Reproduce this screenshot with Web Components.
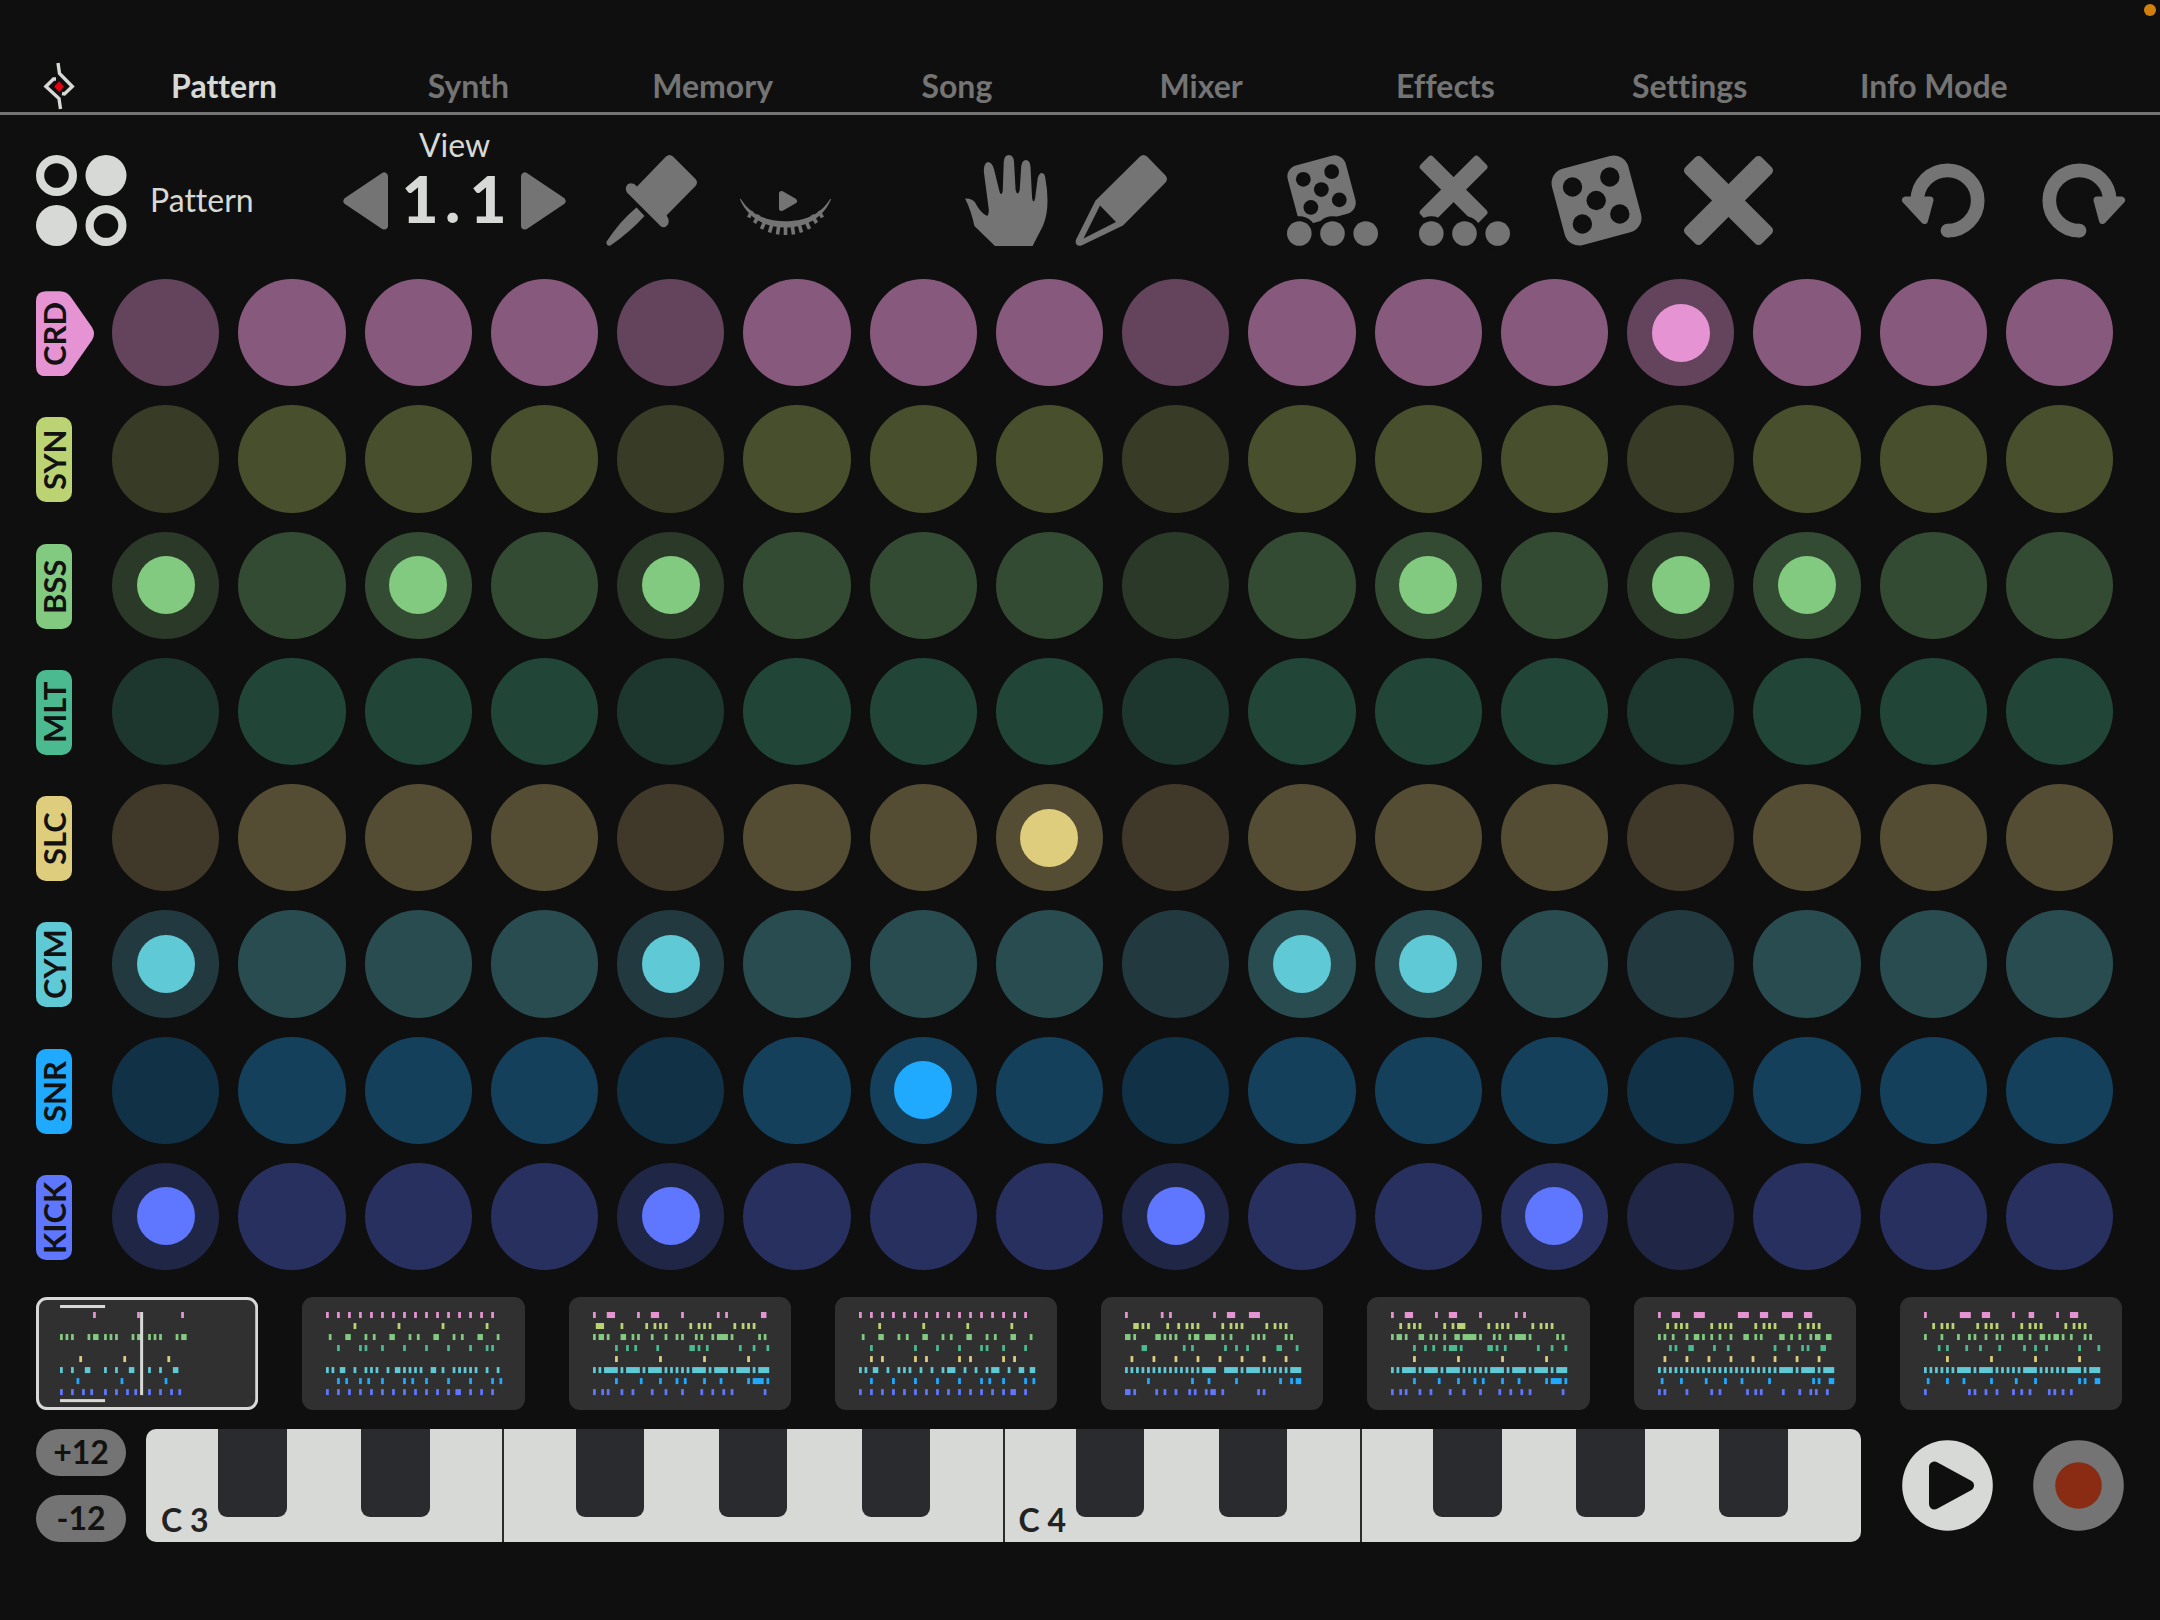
<!DOCTYPE html>
<html lang="en">
<head>
<meta charset="utf-8">
<meta name="viewport" content="width=device-width, initial-scale=1">
<title>Pattern</title>
<style>
  :root {
    --bg: #0f0f0f;
    --light: #d7d9d6;
    --grey: #747474;
    --key: #2a2b2f;
    --panel: #303030;
    --edge: 36px;
  }
  body {
    margin: 0;
    background: var(--bg);
    color: var(--light);
    font: 400 32px/40px Lato, "Open Sans", sans-serif;
    font-variant-ligatures: none;
  }
</style>
</head>
<body>
<groove-app></groove-app>

<script>
const TRACKS = [
  { name: 'CRD', color: '#e693d3', dim: '#64435c', mid: '#87597c', on: [12], active: true },
  { name: 'SYN', color: '#bcd373', dim: '#383b25', mid: '#484f2d', on: [] },
  { name: 'BSS', color: '#82ca80', dim: '#2b3929', mid: '#344b33', on: [0, 2, 4, 10, 12, 13] },
  { name: 'MLT', color: '#4bba90', dim: '#1d372e', mid: '#214638', on: [] },
  { name: 'SLC', color: '#dfcd7e', dim: '#403929', mid: '#544d33', on: [7] },
  { name: 'CYM', color: '#60c9d6', dim: '#223a3f', mid: '#294c51', on: [0, 4, 9, 10] },
  { name: 'SNR', color: '#1faaff', dim: '#113146', mid: '#14405b', on: [6] },
  { name: 'KICK', color: '#5f76ff', dim: '#202646', mid: '#28305f', on: [0, 4, 8, 11] },
];

const EVERY4 = '0 4 8 12 16 20 24 28 32 36 40 44 48 52 56 60';
const SYN_FILL = '3 6 8 10 19 22 24 26 35 38 40 42 51 54 56 58';

// one entry per pattern, one string per track, steps 0-63, "a-b" is a run
const PATTERNS = [
  [
    '12 28 44', '',
    '0 2 4 10 12-13 16 18 20 26 28-29 32 34 36 42 44-45', '',
    '7 23 39', '0 4 9-10 16 20 25-26 32 36 41-42', '6 22 38',
    '0 4 8 11 16 20 24 27 32 36 40 43',
  ],
  [
    EVERY4, '10 26 42 58',
    '1 7-8 14 17 23-24 30 33 39-40 46 49 55-56 62',
    '4 12 14 20 28 36 44 52 58 60', '',
    '0 2 5-6 10 14 16 18 22 25-26 28 30 32 34 38-39 42 46 48 50 52 54 58 62',
    '4 7 12 15 20 28 31 36 44 52 60 63',
    '0 4 8 12 16 20 24 28 32 36 40 44 47-48 52 56 60',
  ],
  [
    '0 5-7 16 21-23 32 45 48 61-62',
    '1-3 10 19 22 24 26 35 38 40 42 51 54 56 58',
    '0 2-3 5 10-11 14 16 21 26 30 32 37 39 43 45-48 50 60 62',
    '8 12 15 23 35-36 38 41 53 58 63', '8 24 40 56',
    '0 2 4-8 10 12-16 18 20-24 26 28 30 32 34 36-40 42 44-48 50 52-56 58 60-63',
    '8 17 24 30 33 40 46 56 58-61 63',
    '0 3 5 10 14 21 26 32 39 43 47 50 62',
  ],
  [
    EVERY4, '7 23 39 55',
    '1 7-8 14 17 23-24 30 33 39-40 46 49 55-56 62',
    '4 20 28 36 44 46 52 60', '4 8 20 24 36 40 52 56',
    '0 2 5-6 10 14 16 18 22 26 30 32-34 38 42 46 48-50 54 58-59 62-63',
    '4 12 20 28 36 44 47 52 60 63',
    '0 4 8 12 16 20 24 28 32 36 40 44 48 52 55-56 60',
  ],
  [
    '0 13 16 32 37-39 45-48',
    '3-4 6 8 15 19 22 24 26 35 38 40 42 51 54 56 58',
    '0-1 3 11-12 14 16 18 23 25-26 29-32 35 38 46 48 50 58 60',
    '6-7 21 24 36 40 44 55-56 62', '2 10 18 26 34 42 50 58',
    '0 2 4 6 8 10 12 14 16 18 20 22 24 26 28-32 36-40 42 44-48 50 52 54 56 58 60-63',
    '8 24 30 40 56 60 62-63',
    '0-1 3 11 14 18 23 25 29 31-32 35 48 50',
  ],
  [
    '0 5-7 16 21-23 32 45 48',
    '3 6 8 10 19 22 24-26 35 38 40 42 51 54 56 58',
    '0 2-3 5 10-11 14 16 19 23-24 26-30 32 37 39 43 45-48 50 60 62',
    '8 12 15 19 21-23 25 35-36 38 41 53 58 63', '8 24 40 56',
    '0 2 4-8 10 12-16 18 20-24 26 28 30 32 34 36-40 42 44-48 50 52-56 58 60-63',
    '8 17 24 30 33 40 46 56 58-61 63',
    '0 3 5 10 14 21 26 32 39 43 47 50 62',
  ],
  [
    '0 5-7 13-16 29-32 37-39 45-48 53-55', SYN_FILL,
    '0 2 5 10 13-14 16 19 22 26 31-32 35 37 44-45 48 51 55 57-58 61-62',
    '4 6 11-12 20 25 42 47 52 54 59-60', '2 10 18 26 34 42 50 58',
    '0 2 4 6 8 10 12 14 16 18 20 22 24 26 28 30 32 34 36 38 40 42 44-48 50 52-56 58 60-63',
    '1 8 17 24 30 40 56 58 62-63',
    '0 2 10 19 22 32 35 37 45 51 55 57 61',
  ],
  [
    '0 13-16 21-23 32 38-39 48 53-55', SYN_FILL,
    '0 6 12 16 18 22 26 28 32 34-35 38 42-43 45 47-48 50 53 58 60',
    '5 8 15 20 27 36 40 44 56 63', '8 24 40 56',
    '0 2 4 6 8 10 12-16 18 20-24 26 28 30 32 34 36-40 42 44 46 48 50 52-56 58 60-63',
    '1 8 14 24 33 40 56 58 62-63',
    '0 16 18 22 26 32 35 38 45 47 50 53',
  ],
];

const DIE = `
  <rect x="6" y="6" width="79" height="79" rx="15" transform="rotate(-15 45.5 45.5)"/>
  <g fill="#0f0f0f">
    <circle cx="21.5" cy="32" r="9.7"/><circle cx="58.8" cy="22" r="9.7"/>
    <circle cx="45.2" cy="45.5" r="9.7"/><circle cx="68.8" cy="59" r="9.7"/>
    <circle cx="31.4" cy="69" r="9.7"/>
  </g>`;
const CROSS = `
  <g transform="rotate(45 45.5 45.5)">
    <rect x="-8.5" y="33.9" width="108" height="23.2" rx="4.5"/>
    <rect x="33.9" y="-8.5" width="23.2" height="108" rx="4.5"/>
  </g>`;
// three steps in front, each with a dark rim that cuts into the shape behind
const STEPS = `
  <g stroke="#0f0f0f" stroke-width="10" paint-order="stroke">
    <circle cx="12.3" cy="78.5" r="12.3"/><circle cx="45.5" cy="78.5" r="12.3"/>
    <circle cx="78.7" cy="78.5" r="12.3"/>
  </g>`;
const TURN = `
  <path d="M15.3 45.5A30.2 30.2 0 1 1 45.5 75.7" fill="none" stroke="currentColor" stroke-width="13.7"/>
  <circle cx="45.5" cy="75.7" r="6.85"/>
  <path d="M3.5 45L28 45L22.5 65.5Z" stroke="currentColor" stroke-width="7" stroke-linejoin="round"/>`;

const ICONS = {
  pattern: `
    <circle cx="20.5" cy="20.5" r="16.4" fill="none" stroke="currentColor" stroke-width="8.2"/>
    <circle cx="70" cy="20.5" r="20.5"/><circle cx="20.5" cy="70.5" r="20.5"/>
    <circle cx="70" cy="70.5" r="16.4" fill="none" stroke="currentColor" stroke-width="8.2"/>`,
  pin: `
    <path d="M60 1.5Q63.5-1.5 67 1.5L89.5 24Q92.5 27.5 89.5 31L60.5 60.5Q64 65 62 69.5Q58.5 74 54.5 71L21 37.5Q18 33 22 29Q27 26.5 31 31.5Z"/>
    <path d="M30.5 52.5L38.5 61Q24 77 4.5 90.5Q1 92 .3 87Q14 66 30.5 52.5Z"/>`,
  eye: `
    <path d="M0 44.5Q0 43 1.5 45C12 61 28 66.2 45.5 66.2S79 61 89.5 45Q91 43 91 44.5C83 63 66 72.5 45.5 72.5S8 63 0 44.5Z"/>
    <path d="M12 56L8.6 62.5M19 60L14.5 68M26 64L21.5 74M32.500 67L29.500 77.500M39 69L37.5 79.5M45.5 69V80M52 69L53.5 79.5M58.500 67L61.500 77.500M65 64L69.5 74M72 60L76.5 68M79 56L82.4 62.5" fill="none" stroke="currentColor" stroke-width="3.6"/>
    <path d="M41.5 38.5V53.5L54.5 46Z" stroke="currentColor" stroke-width="5" stroke-linejoin="round"/>`,
  hand: `
    <path d="M4 43.5Q11 43 14 48C17 54 21 59 25.5 61Q27.5 59 26.8 53L22.2 17Q22 8 26 7Q30 7 32 14L37.5 37Q39.5 42 40.5 36L41.5 7Q42 0 46.5 0Q51 0 51.5 7L53 35Q55 42 57 35L58.5 11Q59.5 5 63 5Q67 5 67.5 12L69 43Q70.5 50 72 43L74.5 23Q76 18 78.5 18Q81.5 18 82 24Q87 53 79.5 71L69.5 91H33L13 71Q10 56 4 43.5Z" transform="translate(-2) scale(1.03 1)"/>`,
  pencil: `
    <path fill-rule="evenodd" d="M64 1.5Q67.5-1.5 71 1.5L89.5 20.5Q92.5 24 89.5 27.5L47 70.5L5.5 90.5Q-1 92-.2 85L19.5 45.5ZM24 50.5L7.5 83.5L40 67Z"/>`,
  diceSteps: `<g transform="scale(.76)">${DIE}</g>${STEPS}`,
  crossSteps: `<g transform="scale(.76)">${CROSS}</g>${STEPS}`,
  dice: DIE,
  cross: CROSS,
  undo: TURN,
  redo: `<g transform="matrix(-1 0 0 1 91 0)">${TURN}</g>`,
  play: `
    <circle cx="45.5" cy="45.5" r="45.3" fill="#d7d9d6"/>
    <path d="M32.5 27V64L66.5 45.5Z" fill="#0f0f0f" stroke="#0f0f0f" stroke-width="11" stroke-linejoin="round"/>`,
  record: `
    <circle cx="45.5" cy="45.5" r="45.3"/>
    <circle cx="45.5" cy="45.5" r="23.3" fill="#8a2c13"/>`,
};

class IconButton extends HTMLElement {
  connectedCallback() {
    this.attachShadow({ mode: 'open' }).innerHTML = `
      <style>
        :host { display: block; flex: none; }
        button {
          display: block;
          padding: 0;
          border: 0;
          background: none;
          color: inherit;
          cursor: pointer;
        }
        svg { display: block; width: 91px; height: 91px; overflow: visible; fill: currentColor; }
      </style>
      <button type="button" aria-label="${this.getAttribute('label')}">
        <svg viewBox="0 0 91 91" aria-hidden="true">${ICONS[this.getAttribute('icon')]}</svg>
      </button>
    `;
  }
}

class AppNav extends HTMLElement {
  connectedCallback() {
    const tabs = ['Pattern', 'Synth', 'Memory', 'Song', 'Mixer', 'Effects', 'Settings', 'Info Mode'];
    this.attachShadow({ mode: 'open' }).innerHTML = `
      <style>
        :host { display: block; border-bottom: 3px solid var(--grey); }
        .status {
          display: flex;
          justify-content: flex-end;
          height: 60px;
          padding: 4px 4px 0 0;
          box-sizing: border-box;
        }
        .status i { width: 12px; height: 12px; border-radius: 50%; background: #d2800c; }
        nav {
          display: grid;
          grid-template-columns: 58px repeat(8, 1fr);
          align-items: center;
          height: 52px;
          padding: 0 104px 0 44px;
        }
        svg { display: block; width: 30px; height: 46px; overflow: visible; }
        a {
          color: var(--grey);
          font-weight: 700;
          text-align: center;
          text-decoration: none;
        }
        a[aria-current] { color: var(--light); }
      </style>
      <div class="status"><i></i></div>
      <nav>
        <svg viewBox="0 0 30 46" fill="none" stroke="#d7d9d6" stroke-width="3.4" aria-hidden="true">
          <path d="M14 0L15.5 10.5L28.3 23.5L20.5 31L18 30.5"/>
          <path d="M16.5 46L15 35.5L1.9 23.5L9.5 16L12 16"/>
          <path d="M15.2 18.3L20.1 23.6L15.2 28.9L10.3 23.6Z" fill="#e60012" stroke="none"/>
        </svg>
        ${tabs.map((t, i) => `<a href="#"${i === 0 ? ' aria-current="page"' : ''}>${t}</a>`).join('')}
      </nav>
    `;
  }
}

class ViewStepper extends HTMLElement {
  connectedCallback() {
    this.attachShadow({ mode: 'open' }).innerHTML = `
      <style>
        :host { display: block; width: 223px; text-align: center; padding-bottom: 9px; }
        .row { display: flex; align-items: center; justify-content: space-between; height: 72px; }
        button { display: block; padding: 0; border: 0; background: none; color: var(--grey); }
        svg { display: block; width: 45px; height: 58px; fill: currentColor; stroke: currentColor; stroke-width: 8; stroke-linejoin: round; }
        output {
          display: flex;
          padding: 0 4px 4px 0;
          font-size: 64px;
          font-weight: 900;
          line-height: 68px;
        }
        output span { width: 34px; }
      </style>
      <div>View</div>
      <div class="row">
        <button type="button" aria-label="Previous view"><svg viewBox="0 0 45 58"><path d="M41 4.5V53.5L4.5 29Z"/></svg></button>
        <output><span>1</span><span>.</span><span>1</span></output>
        <button type="button" aria-label="Next view"><svg viewBox="0 0 45 58"><path d="M4 4.5V53.5L40.5 29Z"/></svg></button>
      </div>
    `;
  }
}

class ToolBar extends HTMLElement {
  connectedCallback() {
    this.attachShadow({ mode: 'open' }).innerHTML = `
      <style>
        :host {
          display: grid;
          grid-template-columns: 307fr 263fr 357fr 324fr 615fr 222px;
          align-items: end;
          padding: 10px var(--edge) 33px;
          color: var(--grey);
        }
        .group { display: flex; align-items: center; gap: 41px; }
        .mode { gap: 23px; color: var(--light); }
        .mode span { padding-bottom: 2px; }
        .follow { gap: 43px; }
        .draw { gap: 22px; }
        view-stepper { color: var(--light); }
      </style>
      <div class="group mode"><icon-button icon="pattern" label="Pattern mode"></icon-button><span>Pattern</span></div>
      <view-stepper></view-stepper>
      <div class="group follow">
        <icon-button icon="pin" label="Pin"></icon-button>
        <icon-button icon="eye" label="Follow"></icon-button>
      </div>
      <div class="group draw">
        <icon-button icon="hand" label="Move"></icon-button>
        <icon-button icon="pencil" label="Draw"></icon-button>
      </div>
      <div class="group">
        <icon-button icon="diceSteps" label="Randomize track"></icon-button>
        <icon-button icon="crossSteps" label="Clear track"></icon-button>
        <icon-button icon="dice" label="Randomize"></icon-button>
        <icon-button icon="cross" label="Clear"></icon-button>
      </div>
      <div class="group">
        <icon-button icon="undo" label="Undo"></icon-button>
        <icon-button icon="redo" label="Redo"></icon-button>
      </div>
    `;
  }
}

class TrackRow extends HTMLElement {
  connectedCallback() {
    const t = TRACKS[this.getAttribute('index')];
    let steps = '';
    for (let i = 0; i < 16; i++) {
      steps += `<button type="button" class="step${i % 4 ? '' : ' beat'}${t.on.includes(i) ? ' on' : ''}" aria-label="Step ${i + 1}"></button>`;
    }
    this.attachShadow({ mode: 'open' }).innerHTML = `
      <style>
        :host {
          display: grid;
          grid-template-columns: 76px 1fr;
          align-items: center;
          padding: 0 47px 0 var(--edge);
        }
        button { border: 0; padding: 0; }
        .name {
          display: flex;
          justify-content: flex-start;
          width: 36px;
          height: 85px;
          margin: 2px 0 0;
          border-radius: 10px;
          background: ${t.color};
          color: #121212;
          font: inherit;
          font-size: 31px;
          font-weight: 700;
        }
        .name span {
          width: 36px;
          height: 85px;
          line-height: 36px;
          text-align: center;
          writing-mode: vertical-rl;
          transform: rotate(180deg);
        }
        .name.active {
          width: 60px;
          border-radius: 0;
          clip-path: path("M10 0H24Q31 0 35 6L56 36Q60 42.5 56 49L35 79Q31 85 24 85H10Q0 85 0 75V10Q0 0 10 0Z");
        }
        .steps { display: grid; grid-template-columns: repeat(16, 1fr); gap: 19px; }
        .step {
          display: grid;
          place-items: center;
          aspect-ratio: 1;
          border-radius: 50%;
          background: ${t.mid};
        }
        .beat { background: ${t.dim}; }
        .on::before {
          content: "";
          width: 54%;
          aspect-ratio: 1;
          border-radius: 50%;
          background: ${t.color};
        }
      </style>
      <button type="button" class="name${t.active ? ' active' : ''}"><span>${t.name}</span></button>
      <div class="steps">${steps}</div>
    `;
  }
}

class PatternThumb extends HTMLElement {
  connectedCallback() {
    const index = Number(this.getAttribute('index'));
    const step = 2.75;
    let notes = '';
    PATTERNS[index].forEach((row, r) => {
      row.split(' ').filter(Boolean).forEach((run) => {
        const [a, b = a] = run.split('-').map(Number);
        notes += `<rect x="${24 + a * step}" y="${15 + r * 11}" width="${(b - a + 1) * step}" height="6" fill="${TRACKS[r].color}"/>`;
      });
    });
    const marks = index === 0 ? `
      <g fill="#d7d9d6">
        <rect x="24" y="8" width="45" height="3"/>
        <rect x="24" y="102" width="45" height="3"/>
        <rect x="104" y="15" width="3" height="83"/>
      </g>
      <rect x="1.5" y="1.5" width="219" height="110" rx="9.5" fill="none" stroke="#d7d9d6" stroke-width="3"/>` : '';
    this.attachShadow({ mode: 'open' }).innerHTML = `
      <style>
        :host { display: block; }
        button {
          display: block;
          width: 100%;
          padding: 0;
          border: 0;
          border-radius: 11px;
          background: var(--panel);
        }
        svg { display: block; width: 100%; }
      </style>
      <button type="button" aria-label="Pattern ${index + 1}">
        <svg viewBox="0 0 222 113" aria-hidden="true">${notes}${marks}</svg>
      </button>
    `;
  }
}

class PianoKeys extends HTMLElement {
  connectedCallback() {
    const black = [1, 3, 6, 8, 10];
    let keys = '';
    for (let i = 0; i < 24; i++) {
      const n = i % 12;
      const kind = black.includes(n) ? 'black' : n === 4 || (n === 11 && i < 23) ? 'white split' : 'white';
      const text = n === 0 ? `C ${3 + i / 12}` : '';
      keys += `<button type="button" class="${kind}" aria-label="Key ${i + 1}">${text}</button>`;
    }
    this.attachShadow({ mode: 'open' }).innerHTML = `
      <style>
        :host {
          display: grid;
          grid-template-columns: repeat(24, 1fr);
          height: 113px;
          border-radius: 10px;
          overflow: hidden;
          background: var(--light);
        }
        button {
          min-width: 0;
          margin: 0;
          border: 0;
          font: inherit;
          font-weight: 700;
          white-space: nowrap;
        }
        .white {
          display: flex;
          align-items: flex-end;
          padding: 0 0 2px 15px;
          background: none;
          color: #222;
        }
        .split { box-shadow: 1px 0 var(--key), inset -1px 0 var(--key); }
        .black {
          height: 88px;
          margin: 0 2px 0 1px;
          border-radius: 0 0 9px 9px;
          background: var(--key);
        }
      </style>
      ${keys}
    `;
  }
}

class PlayBar extends HTMLElement {
  connectedCallback() {
    this.attachShadow({ mode: 'open' }).innerHTML = `
      <style>
        :host {
          display: grid;
          grid-template-columns: 90px 1fr 222px;
          column-gap: 20px;
          align-items: center;
          padding: 0 var(--edge);
        }
        .octave { display: grid; gap: 19px; }
        .octave button {
          height: 47px;
          padding: 0 0 2px;
          border: 0;
          border-radius: 24px;
          background: var(--grey);
          color: #121212;
          font: inherit;
          font-weight: 700;
        }
        piano-keys { margin-right: 21px; }
        .transport { display: flex; justify-content: space-between; color: var(--grey); }
      </style>
      <div class="octave">
        <button type="button">+12</button>
        <button type="button">-12</button>
      </div>
      <piano-keys></piano-keys>
      <div class="transport">
        <icon-button icon="play" label="Play"></icon-button>
        <icon-button icon="record" label="Record"></icon-button>
      </div>
    `;
  }
}

class GrooveApp extends HTMLElement {
  connectedCallback() {
    this.attachShadow({ mode: 'open' }).innerHTML = `
      <style>
        :host { display: block; }
        .tracks { display: grid; gap: 19px; }
        .thumbs {
          display: grid;
          grid-template-columns: repeat(8, 1fr);
          gap: 44px;
          padding: 27px 38px 19px var(--edge);
        }
      </style>
      <app-nav></app-nav>
      <tool-bar></tool-bar>
      <main>
        <div class="tracks">${TRACKS.map((t, i) => `<track-row index="${i}"></track-row>`).join('')}</div>
        <div class="thumbs">${PATTERNS.map((p, i) => `<pattern-thumb index="${i}"></pattern-thumb>`).join('')}</div>
      </main>
      <play-bar></play-bar>
    `;
  }
}

customElements.define('icon-button', IconButton);
customElements.define('app-nav', AppNav);
customElements.define('view-stepper', ViewStepper);
customElements.define('tool-bar', ToolBar);
customElements.define('track-row', TrackRow);
customElements.define('pattern-thumb', PatternThumb);
customElements.define('piano-keys', PianoKeys);
customElements.define('play-bar', PlayBar);
customElements.define('groove-app', GrooveApp);
</script>
</body>
</html>
